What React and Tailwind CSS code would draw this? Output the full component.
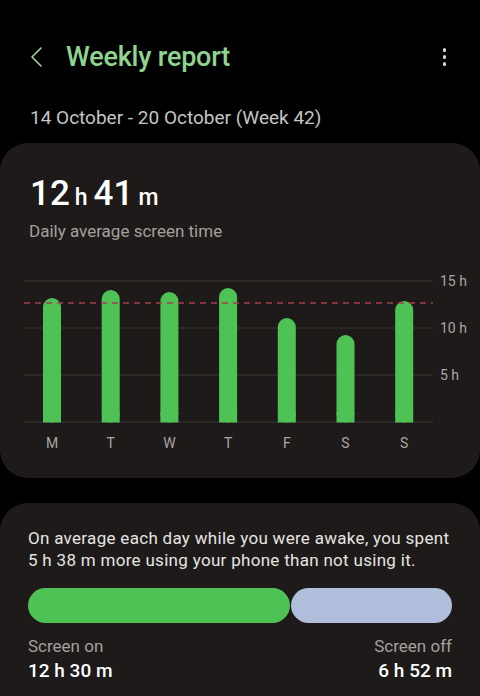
import React from 'react'

const bars = [
  { day: 'M', top: 296 },
  { day: 'T', top: 288 },
  { day: 'W', top: 290 },
  { day: 'T', top: 286 },
  { day: 'F', top: 316 },
  { day: 'S', top: 333 },
  { day: 'S', top: 299 },
]

// chart is drawn in its own coordinates, offset 24px from the card edge and 270px from page top
function WeekChart() {
  const grid = [9, 56, 103, 150]
  const axis = [
    { y: 14, label: '15 h' },
    { y: 61, label: '10 h' },
    { y: 108, label: '5 h' },
  ]
  return (
    <svg width="456" height="182" viewBox="0 0 456 182" className="block">
      {grid.map((y) => (
        <line key={y} x1="0" x2="409" y1={y} y2={y} stroke="#3a3634" strokeWidth="1" />
      ))}
      {axis.map((a) => (
        <text key={a.label} x="416" y={a.y} fill="#a9a6a4" fontSize="14" fontFamily="Roboto, sans-serif">
          {a.label}
        </text>
      ))}
      {bars.map((b, i) => {
        const cx = 28 + i * 58.7
        const top = b.top - 270
        return (
          <g key={i}>
            <rect x={cx - 9} y={top} width="18" height={150.5 - top} rx="9" fill="#4fc255" />
            <rect x={cx - 9} y={140} width="18" height={10.5} fill="#4fc255" />
            <text x={cx} y="176" textAnchor="middle" fill="#a9a6a4" fontSize="14" fontFamily="Roboto, sans-serif">
              {b.day}
            </text>
          </g>
        )
      })}
      <line x1="0" x2="409" y1="31" y2="31" stroke="#a83c4e" strokeWidth="1.5" strokeDasharray="6 5" />
    </svg>
  )
}

export default function App() {
  return (
    <div className="w-[480px] h-[696px] overflow-hidden bg-black" style={{ fontFamily: 'Roboto, "Noto Sans", sans-serif' }}>
      {/* header */}
      <div className="flex items-center h-[58px] mt-[28px] pl-[30px] pr-[34px]">
        <svg width="14" height="22" viewBox="0 0 14 22" fill="none" className="shrink-0">
          <path d="M11 2 L2 11 L11 20" stroke="#a5cfa5" strokeWidth="1.6" strokeLinecap="round" strokeLinejoin="round" />
        </svg>
        <h1 className="ml-[22px] text-[27px] font-medium text-[#8fd48f] tracking-[-0.2px]">Weekly report</h1>
        <div className="ml-auto flex flex-col gap-[3.5px] items-center">
          <span className="w-[3.5px] h-[3.5px] rounded-full bg-[#c6e6d6]" />
          <span className="w-[3.5px] h-[3.5px] rounded-full bg-[#c6e6d6]" />
          <span className="w-[3.5px] h-[3.5px] rounded-full bg-[#c6e6d6]" />
        </div>
      </div>

      <p className="pl-[30px] mt-[20px] text-[19px] leading-[24px] text-[#c3c6c1]">14 October - 20 October (Week 42)</p>

      {/* daily average card */}
      <div className="mt-[13px] h-[335px] rounded-[28px] bg-[#1d1a19] pt-[31px]">
        <div className="pl-[30px] flex items-baseline text-white font-medium">
          <span className="text-[35px] leading-[40px]">12</span>
          <span className="text-[23px] ml-[5px]">h</span>
          <span className="text-[35px] leading-[40px] ml-[6px]">41</span>
          <span className="text-[23px] ml-[5px]">m</span>
        </div>
        <p className="pl-[29px] mt-[4px] text-[17px] leading-[22px] text-[#a3a09e]">Daily average screen time</p>
        <div className="pl-[24px] mt-[30px]">
          <WeekChart />
        </div>
      </div>

      {/* awake card */}
      <div className="mt-[25px] rounded-[28px] bg-[#1d1a19] px-[28px] pt-[24px] pb-[40px]">
        <p className="text-[17px] leading-[22px] tracking-[0.3px] text-[#e6e4e2]">
          On average each day while you were awake, you spent
          <br />
          5 h 38 m more using your phone than not using it.
        </p>
        <div className="mt-[17px] flex h-[35px]">
          <div className="w-[262px] rounded-full bg-[#4fc255]" />
          <div className="ml-[1px] flex-1 rounded-full bg-[#b0bedc]" />
        </div>
        <div className="mt-[12px] flex justify-between">
          <div>
            <p className="text-[17px] leading-[22px] text-[#a3a09e]">Screen on</p>
            <p className="mt-[2px] text-[19px] leading-[24px] font-medium text-white">12 h 30 m</p>
          </div>
          <div className="text-right">
            <p className="text-[17px] leading-[22px] text-[#a3a09e]">Screen off</p>
            <p className="mt-[2px] text-[19px] leading-[24px] font-medium text-white">6 h 52 m</p>
          </div>
        </div>
      </div>
    </div>
  )
}
